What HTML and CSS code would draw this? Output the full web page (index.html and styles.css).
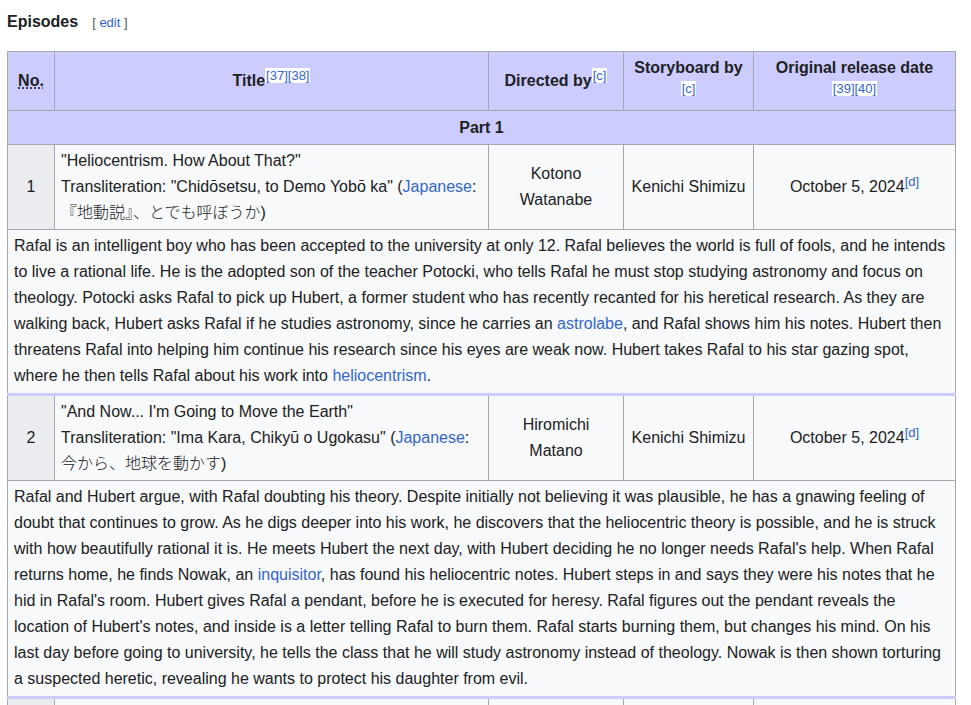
FILE: index.html
```html
<!DOCTYPE html>
<html lang="en">
<head>
<meta charset="utf-8">
<title>Episodes</title>
<link rel="stylesheet" href="styles.css">
</head>
<body>
<div class="page">
  <h3 class="heading">
    <span class="heading-title">Episodes</span>
    <span class="editsection"><span class="bracket">[</span> <a href="#">edit</a> <span class="bracket">]</span></span>
  </h3>
  <table class="wikitable">
    <colgroup>
      <col class="c-no"><col class="c-title"><col class="c-dir"><col class="c-sb"><col class="c-date">
    </colgroup>
    <thead>
      <tr>
        <th><abbr title="Number">No.</abbr></th>
        <th>Title<sup class="ref">[37][38]</sup></th>
        <th>Directed by<sup class="ref">[c]</sup></th>
        <th>Storyboard by <sup class="ref">[c]</sup></th>
        <th>Original release date<br><sup class="ref">[39][40]</sup></th>
      </tr>
    </thead>
    <tbody>
      <tr><th colspan="5" class="part">Part 1</th></tr>
      <tr class="ep">
        <td class="num">1</td>
        <td class="summary-title">"Heliocentrism. How About That?"<br>Transliteration: "Chidōsetsu, to Demo Yobō ka" (<a href="#">Japanese</a>: <span lang="ja" class="ja">『地動説』、とでも呼ぼうか</span>)</td>
        <td class="ctr">Kotono Watanabe</td>
        <td class="ctr">Kenichi Shimizu</td>
        <td class="ctr">October 5, 2024<sup class="note">[d]</sup></td>
      </tr>
      <tr class="desc">
        <td colspan="5">Rafal is an intelligent boy who has been accepted to the university at only 12. Rafal believes the world is full of fools, and he intends to live a rational life. He is the adopted son of the teacher Potocki, who tells Rafal he must stop studying astronomy and focus on theology. Potocki asks Rafal to pick up Hubert, a former student who has recently recanted for his heretical research. As they are walking back, Hubert asks Rafal if he studies astronomy, since he carries an <a href="#">astrolabe</a>, and Rafal shows him his notes. Hubert then threatens Rafal into helping him continue his research since his eyes are weak now. Hubert takes Rafal to his star gazing spot, where he then tells Rafal about his work into <a href="#">heliocentrism</a>.</td>
      </tr>
      <tr class="ep">
        <td class="num">2</td>
        <td class="summary-title">"And Now... I'm Going to Move the Earth"<br>Transliteration: "Ima Kara, Chikyū o Ugokasu" (<a href="#">Japanese</a>: <span lang="ja" class="ja">今から、地球を動かす</span>)</td>
        <td class="ctr">Hiromichi Matano</td>
        <td class="ctr">Kenichi Shimizu</td>
        <td class="ctr">October 5, 2024<sup class="note">[d]</sup></td>
      </tr>
      <tr class="desc">
        <td colspan="5">Rafal and Hubert argue, with Rafal doubting his theory. Despite initially not believing it was plausible, he has a gnawing feeling of doubt that continues to grow. As he digs deeper into his work, he discovers that the heliocentric theory is possible, and he is struck with how beautifully rational it is. He meets Hubert the next day, with Hubert deciding he no longer needs Rafal's help. When Rafal returns home, he finds Nowak, an <a href="#">inquisitor</a>, has found his heliocentric notes. Hubert steps in and says they were his notes that he hid in Rafal's room. Hubert gives Rafal a pendant, before he is executed for heresy. Rafal figures out the pendant reveals the location of Hubert's notes, and inside is a letter telling Rafal to burn them. Rafal starts burning them, but changes his mind. On his last day before going to university, he tells the class that he will study astronomy instead of theology. Nowak is then shown torturing a suspected heretic, revealing he wants to protect his daughter from evil.</td>
      </tr>
      <tr class="ep">
        <td class="num">3</td>
        <td class="summary-title">"Let's Bet My Life on It"<br>Transliteration: "Inochi o Kakeru" (<a href="#">Japanese</a>: <span lang="ja" class="ja">命を懸ける</span>)</td>
        <td class="ctr">Kotono Watanabe</td>
        <td class="ctr">Kenichi Shimizu</td>
        <td class="ctr">October 12, 2024</td>
      </tr>
    </tbody>
  </table>
</div>
</body>
</html>
```

FILE: styles.css
```css
html, body {
  margin: 0;
  padding: 0;
  background: #fff;
}
body {
  font-family: "Liberation Sans", Arial, "Noto Sans CJK JP", sans-serif;
  color: #202122;
  font-size: 16px;
}
.page {
  padding: 8px 7px 0 7px;
}
a {
  color: #3366cc;
  text-decoration: none;
}
.heading {
  margin: 0;
  height: 43px;
  font-size: 16px;
  font-weight: bold;
  line-height: 28px;
  display: flex;
  align-items: baseline;
  gap: 14px;
}
.editsection {
  font-size: 13px;
  font-weight: normal;
}
.editsection .bracket {
  color: #54595d;
}
.wikitable {
  width: 948px;
  border-collapse: collapse;
  table-layout: fixed;
  background: #f8f9fa;
  border: 1px solid #a2a9b1;
  line-height: 26px;
}
.c-no { width: 47px; }
.c-title { width: 434px; }
.c-dir { width: 135px; }
.c-sb { width: 130px; }
.c-date { width: 202px; }
.wikitable th,
.wikitable td {
  border: 1px solid #a2a9b1;
  padding: 3px 6px 3px 6px;
  vertical-align: middle;
}
.wikitable thead th {
  background: #ccccff;
  font-weight: bold;
  text-align: center;
  line-height: 26px;
  padding: 3px 6px;
  height: 52px;
}
.wikitable th.part {
  background: #ccccff;
  text-align: center;
  font-weight: bold;
  height: 27px;
  padding: 3px 6px;
}
abbr {
  text-decoration: underline dotted;
  text-underline-offset: 2px;
}
sup {
  font-size: 13px;
  line-height: 1;
  vertical-align: super;
}
sup.ref {
  background: #fff;
  color: #3366cc;
  font-weight: normal;
  padding: 0 1px;
}
sup.note {
  color: #3366cc;
}
.num {
  background: #eaecf0;
  text-align: center;
}
.ctr {
  text-align: center;
}
.ja {
  font-family: "Noto Sans CJK JP", sans-serif;
  font-weight: 300;
  line-height: 16px;
}
.wikitable .desc td {
  border-bottom: 3px solid #ccccff;
  text-align: left;
  padding-bottom: 4px;
}
```
